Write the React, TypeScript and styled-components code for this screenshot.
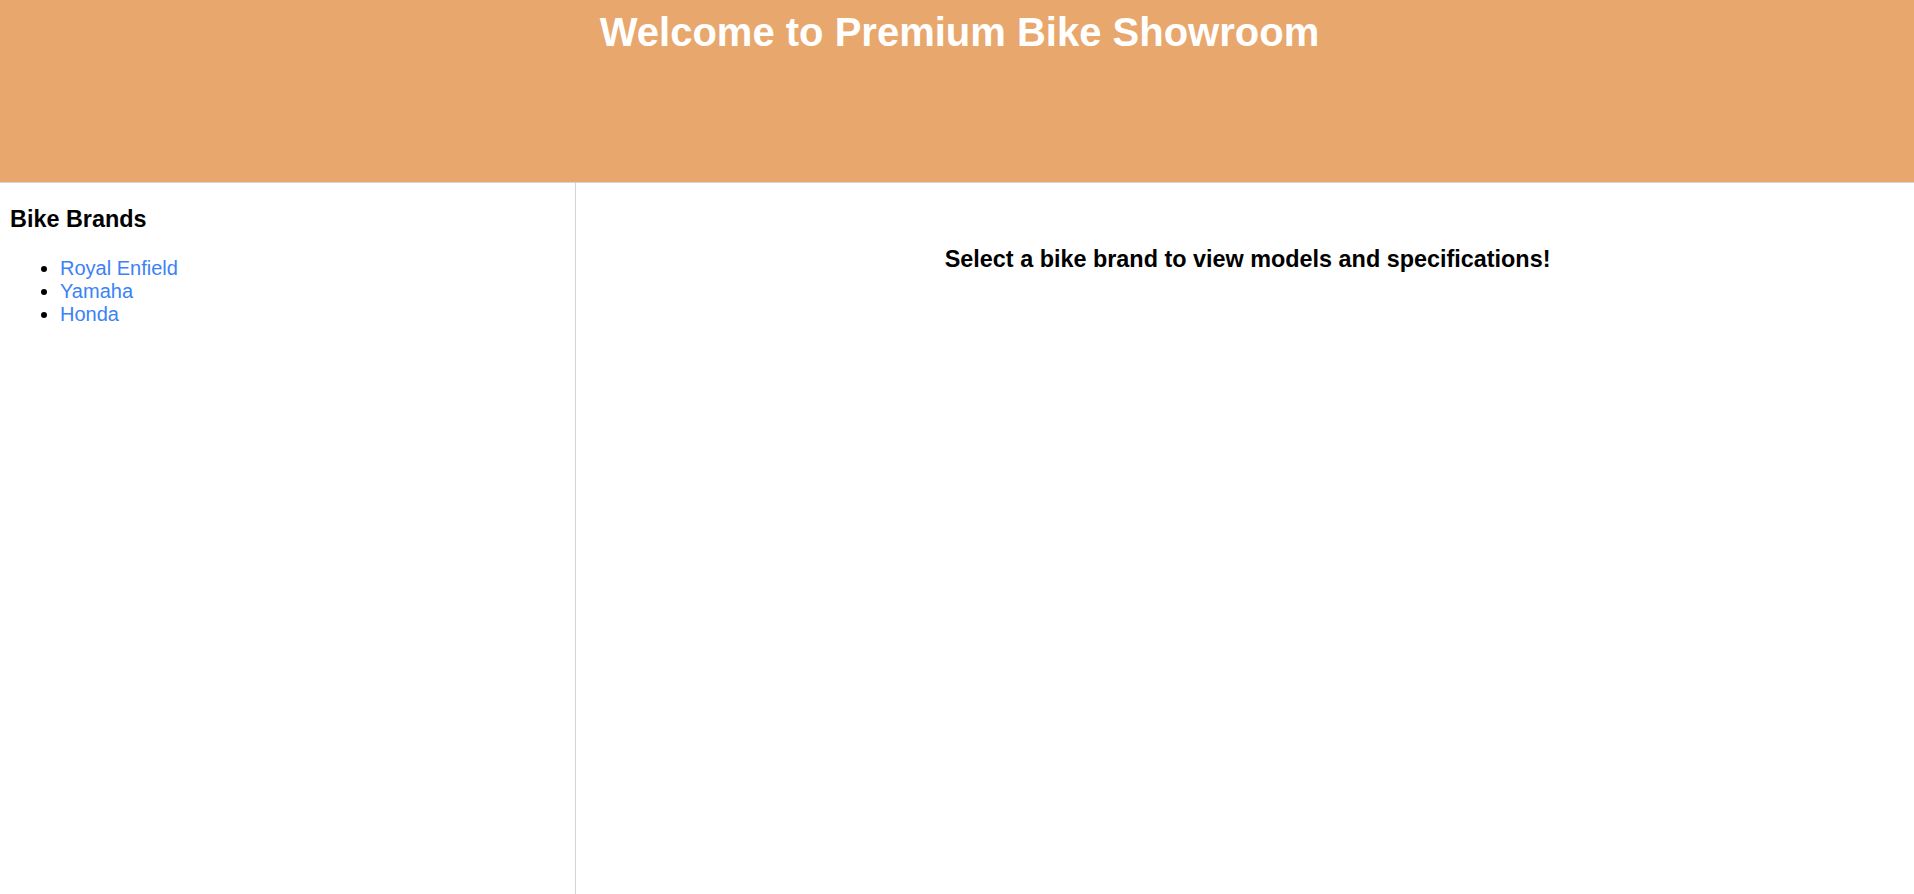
import React from "react";
import styled, { createGlobalStyle } from "styled-components";

const GlobalStyle = createGlobalStyle`
  html, body {
    margin: 0;
    padding: 0;
    background: #ffffff;
    font-family: "Liberation Sans", Arial, sans-serif;
  }
  #root {
    min-height: 100vh;
  }
`;

const Page = styled.div`
  display: flex;
  flex-direction: column;
  min-height: 100vh;
`;

const Header = styled.header`
  background: #e8a76d;
  border-bottom: 1px solid #d4d4d4;
  padding: 10px 0 0 5px;
  box-sizing: border-box;
  height: 183px;
`;

const Title = styled.h1`
  margin: 0;
  text-align: center;
  color: #ffffff;
  font-size: 40px;
  font-weight: bold;
`;

const Body = styled.div`
  display: flex;
  flex: 1;
`;

const Sidebar = styled.aside`
  width: calc(30% + 2px);
  flex-shrink: 0;
  box-sizing: border-box;
  padding: 0 10px;
  border-right: 1px solid #d4d4d4;
`;

const SectionTitle = styled.h3`
  margin: 23px 0 0;
  font-size: 23.4px;
  font-weight: bold;
  color: #000;
`;

const BrandList = styled.ul`
  margin: 24px 0 0;
  padding-left: 50px;
  font-size: 20px;
`;

const BrandItem = styled.li`
  color: #000;
`;

const BrandLink = styled.a`
  color: #3b82f6;
  text-decoration: none;
  cursor: pointer;
`;

const Main = styled.main`
  flex: 1;
  padding: 63px 0 0 5px;
  text-align: center;
`;

const Prompt = styled.h3`
  margin: 0;
  font-size: 23.4px;
  font-weight: bold;
  color: #000;
`;

const brands = ["Royal Enfield", "Yamaha", "Honda"];

export default function App() {
  return (
    <>
      <GlobalStyle />
      <Page>
        <Header>
          <Title>Welcome to Premium Bike Showroom</Title>
        </Header>
        <Body>
          <Sidebar>
            <SectionTitle>Bike Brands</SectionTitle>
            <BrandList>
              {brands.map((b) => (
                <BrandItem key={b}>
                  <BrandLink>{b}</BrandLink>
                </BrandItem>
              ))}
            </BrandList>
          </Sidebar>
          <Main>
            <Prompt>Select a bike brand to view models and specifications!</Prompt>
          </Main>
        </Body>
      </Page>
    </>
  );
}
